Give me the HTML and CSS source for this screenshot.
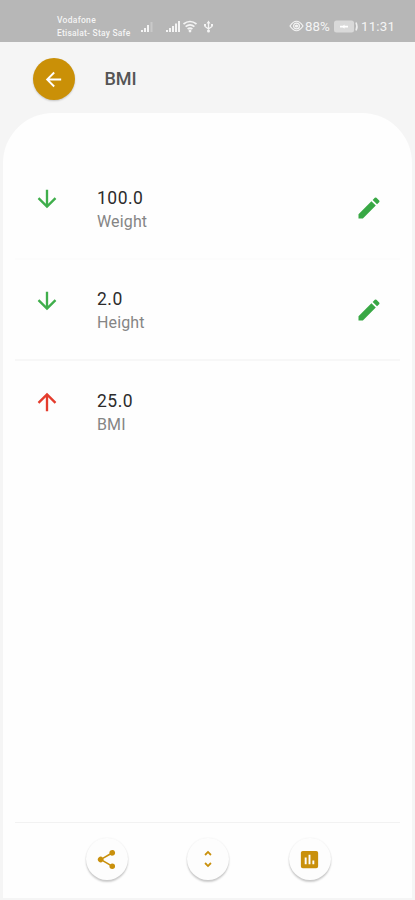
FILE: index.html
```html
<!DOCTYPE html>
<html lang="en">
<head>
<meta charset="utf-8">
<title>BMI</title>
<link rel="stylesheet" href="styles.css">
</head>
<body>
<div class="status">
  <div class="carrier"><span class="network">Vodafone</span><br>Etisalat- Stay Safe</div>
  <svg class="signals" width="74" height="14" viewBox="0 0 74 14" fill="#f4f4f4">
    <path d="M1 10h2v2H1zM4 8h2v4H4zM7 5h2v7H7z"/>
    <path d="M10.500 2h2v10h-2z" opacity=".3"/>
    <path d="M26 10h2v2h-2zM29 8h2v4h-2zM32 6h2v6h-2zM35 3.500h2v8.500h-2zM38 1h2v11h-2z"/>
    <g fill="none" stroke="#f4f4f4" stroke-width="1.700"><path d="M43.500 4q6.500-5 13 0M45.600 6.600q4.400-3.400 8.800 0M47.600 9q2.400-1.800 4.800 0"/></g>
    <circle cx="50" cy="11" r="1.400"/>
    <g fill="none" stroke="#f4f4f4" stroke-width="1.300"><path d="M68.500 2v9M65 5v1.500L68.500 9 72 6.500V5"/></g>
    <path d="M66.500 3.500l2-3 2 3zM64 4h2v2h-2zM71 4h2v2h-2z"/><circle cx="68.500" cy="11" r="1.500"/>
  </svg>
  <div class="right">
    <svg width="15" height="12" viewBox="0 0 15 12" fill="none" stroke="#f4f4f4" stroke-width="1.200"><path d="M1 6q6.500-9.500 13 0q-6.500 9.500-13 0z"/><circle cx="7.500" cy="6" r="2.900"/><circle cx="7.500" cy="6" r="1" fill="#f4f4f4"/></svg>
    <span class="percent">88%</span>
    <svg class="battery" width="25" height="13" viewBox="0 0 25 13"><rect x="0" y=".5" width="20" height="12" rx="2.500" fill="#d9d9d9"/><path d="M6 5.800h3l1.500-1.300v1.300H14v1.600h-3.500v1.300L9 7.400H6z" fill="#fff"/><path d="M22 2.500q2 4 0 8" fill="none" stroke="#eee" stroke-width="1.500"/></svg>
    <span class="clock">11:31</span>
  </div>
</div>
<header class="header">
  <button class="back" aria-label="Back"><svg width="23" height="23" viewBox="0 0 24 24" fill="#fff"><path d="M20 11H7.830l5.590-5.590L12 4l-8 8 8 8 1.410-1.410L7.830 13H20z"/></svg></button>
  <h1 class="title">BMI</h1>
</header>
<main class="card">
  <section class="row faint">
    <svg class="trend down" viewBox="0 0 24 24"><path d="M20 12l-1.410-1.410L13 16.170V4h-2v12.170l-5.580-5.590L4 12l8 8z"/></svg>
    <div class="info"><div class="value">100.0</div><div class="label">Weight</div></div>
    <svg class="edit" viewBox="0 0 24 24"><path d="M3 17.250V21h3.750L17.810 9.940l-3.750-3.750zM20.710 7.040a1 1 0 0 0 0-1.410l-2.340-2.340a1 1 0 0 0-1.410 0l-1.830 1.830 3.750 3.750z"/></svg>
  </section>
  <section class="row">
    <svg class="trend down" viewBox="0 0 24 24"><path d="M20 12l-1.410-1.410L13 16.170V4h-2v12.170l-5.580-5.590L4 12l8 8z"/></svg>
    <div class="info"><div class="value">2.0</div><div class="label">Height</div></div>
    <svg class="edit" viewBox="0 0 24 24"><path d="M3 17.250V21h3.750L17.810 9.940l-3.750-3.750zM20.710 7.040a1 1 0 0 0 0-1.410l-2.340-2.340a1 1 0 0 0-1.410 0l-1.830 1.830 3.750 3.750z"/></svg>
  </section>
  <section class="row last">
    <svg class="trend up" viewBox="0 0 24 24"><path d="M4 12l1.410 1.410L11 7.830V20h2V7.830l5.580 5.590L20 12l-8-8z"/></svg>
    <div class="info"><div class="value">25.0</div><div class="label">BMI</div></div>
  </section>
  <footer class="actions">
    <button class="fab" aria-label="Share"><svg width="23" height="23" viewBox="0 0 24 24"><path d="M18 16.080c-.76 0-1.440.3-1.960.77L8.910 12.700a3.300 3.300 0 0 0 0-1.400l7.050-4.110A3 3 0 1 0 15 5c0 .24.040.47.090.7L8.040 9.810a3 3 0 1 0 0 4.380l7.120 4.160c-.05.21-.08.43-.08.650a2.920 2.920 0 1 0 2.920-2.920z"/></svg></button>
    <button class="fab" aria-label="Expand"><svg width="22" height="22" viewBox="0 0 24 24"><path d="M12 5.830L14.500 8.330l1.410-1.410L12 3 8.080 6.920 9.500 8.330zM12 18.170l-2.500-2.500-1.410 1.410L12 21l3.920-3.920-1.420-1.410z"/></svg></button>
    <button class="fab" aria-label="Statistics"><svg width="23" height="23" viewBox="0 0 24 24"><path d="M19 3H5a2 2 0 0 0-2 2v14a2 2 0 0 0 2 2h14a2 2 0 0 0 2-2V5a2 2 0 0 0-2-2zM9 17H7v-7h2zm4 0h-2V7h2zm4 0h-2v-4h2z"/></svg></button>
  </footer>
</main>
</body>
</html>
```
FILE: styles.css
```css
* { box-sizing: border-box; }
body {
  margin: 0;
  height: 900px;
  display: flex;
  flex-direction: column;
  background: #f5f5f5;
  font-family: Roboto, sans-serif;
  overflow: hidden;
}
svg { display: block; flex: none; }
button { border: 0; padding: 0; }
.status {
  height: 42px;
  flex: none;
  display: flex;
  align-items: flex-start;
  background: #b7b7b7;
  color: #f4f4f4;
  padding-left: 57px;
}
.carrier {
  width: 83px;
  margin-top: 14px;
  font-size: 8.500px;
  font-weight: 500;
  line-height: 12.500px;
  letter-spacing: .22px;
  white-space: nowrap;
}
.network { letter-spacing: .3px; }
.signals { margin-top: 20px; }
.right {
  display: flex;
  align-items: center;
  height: 14px;
  margin: 19px 0 0 75px;
  font-size: 13.300px;
}
.percent { width: 28px; margin-left: 1px; }
.battery { margin-left: 1px; }
.clock { margin-left: 2px; letter-spacing: .2px; }
.header {
  height: 71px;
  flex: none;
  display: flex;
  align-items: center;
  padding: 3px 0 0 32.500px;
}
.back {
  width: 42px;
  height: 42px;
  border-radius: 50%;
  background: #ca9007;
  display: grid;
  place-items: center;
  box-shadow: 0 1px 2px #0003;
}
.title {
  margin: 0 0 0 30px;
  font-size: 18px;
  font-weight: 500;
  line-height: 24px;
  color: #555;
}
.card {
  flex: 1;
  margin: 0 3px 2px;
  padding: 45px 12px 0;
  border-radius: 50px 50px 0 0;
  background: #fefefe;
  display: flex;
  flex-direction: column;
}
.row {
  height: 101.500px;
  flex: none;
  display: flex;
  align-items: flex-start;
  padding: 27px 17px 0 17.500px;
  border-bottom: 2px solid #f7f7f7;
}
.faint { border-color: #fcfcfc; }
.last { border: 0; }
.trend { width: 28px; height: 28px; }
.down { fill: #3fae4b; }
.up { fill: #e43c2d; }
.info { margin: .5px 0 0 36.500px; flex: 1; }
.value {
  font-size: 17.500px;
  line-height: 24px;
  letter-spacing: .5px;
  color: #2c2c2c;
}
.label {
  font-size: 16px;
  line-height: 24px;
  letter-spacing: .15px;
  color: #858585;
}
.edit {
  width: 28px;
  height: 28px;
  margin-top: 9px;
  fill: #39a845;
}
.actions {
  height: 76px;
  margin-top: auto;
  display: flex;
  gap: 59.500px;
  padding: 15px 0 0 70.500px;
  border-top: 1px solid #f2f2f2;
}
.fab {
  width: 42px;
  height: 42px;
  border-radius: 50%;
  background: #fdfdfd;
  display: grid;
  place-items: center;
  box-shadow: 0 2px 2px #0003, 0 0 2px #00000012;
}
.fab svg { fill: #c9900c; }
```
